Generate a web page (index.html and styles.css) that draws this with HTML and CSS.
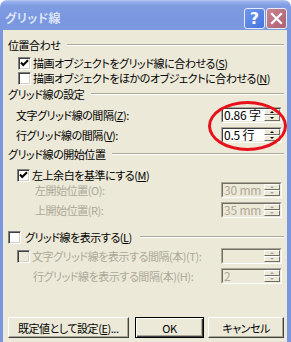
FILE: index.html
```html
<!DOCTYPE html>
<html lang="ja">
<head>
<meta charset="utf-8">
<link rel="stylesheet" href="styles.css">
</head>
<body>
<div class="window">
  <div class="titlebar">
    <span class="title">グリッド線</span>
    <div class="tbtns">
      <span class="tbtn help">?</span>
      <span class="tbtn close"><svg width="13" height="13" viewBox="0 0 13 13"><path d="M2 2L11 11M11 2L2 11" stroke="#fff" stroke-width="2.2" stroke-linecap="square"/></svg></span>
    </div>
  </div>
  <div class="frame">
    <div class="row r1 group"><span>位置合わせ</span><span class="sep"></span></div>
    <div class="row r2 ind10"><span class="cb checked"><svg width="11" height="11" viewBox="0 0 11 11"><path d="M2 4.5L4.2 7L9 2.2" stroke="#000" stroke-width="2" fill="none"/></svg></span><span>描画オブジェクトをグリッド線に合わせる(<u>S</u>)</span></div>
    <div class="row r3 ind10"><span class="cb"></span><span>描画オブジェクトをほかのオブジェクトに合わせる(<u>N</u>)</span></div>
    <div class="row r4 group"><span>グリッド線の設定</span><span class="sep"></span></div>
    <div class="row r5 ind8"><span>文字グリッド線の間隔(<u>Z</u>):</span>
      <div class="spin"><div class="spin-in"><span class="val">0.86 字</span><span class="arrows"><span class="ab"><i class="up"></i></span><span class="ab"><i class="down"></i></span></span></div></div>
    </div>
    <div class="row r6 ind8"><span>行グリッド線の間隔(<u>V</u>):</span>
      <div class="spin"><div class="spin-in"><span class="val">0.5 行</span><span class="arrows"><span class="ab"><i class="up"></i></span><span class="ab"><i class="down"></i></span></span></div></div>
    </div>
    <div class="row r7 group"><span>グリッド線の開始位置</span><span class="sep"></span></div>
    <div class="row r8 ind9"><span class="cb checked"><svg width="11" height="11" viewBox="0 0 11 11"><path d="M2 4.5L4.2 7L9 2.2" stroke="#000" stroke-width="2" fill="none"/></svg></span><span>左上余白を基準にする(<u>M</u>)</span></div>
    <div class="row r9 ind27 dis"><span>左開始位置(O):</span>
      <div class="spin off"><div class="spin-in"><span class="val">30 mm</span><span class="arrows"><span class="ab"><i class="up"></i></span><span class="ab"><i class="down"></i></span></span></div></div>
    </div>
    <div class="row r10 ind27 dis"><span>上開始位置(R):</span>
      <div class="spin off"><div class="spin-in"><span class="val">35 mm</span><span class="arrows"><span class="ab"><i class="up"></i></span><span class="ab"><i class="down"></i></span></span></div></div>
    </div>
    <div class="row r11"><span class="cb"></span><span class="cbt">グリッド線を表示する(<u>L</u>)</span><span class="sep"></span></div>
    <div class="row r12 ind9 dis"><span class="cb off"></span><span>文字グリッド線を表示する間隔(本)(T):</span>
      <div class="spin off"><div class="spin-in"><span class="val"></span><span class="arrows"><span class="ab"><i class="up"></i></span><span class="ab"><i class="down"></i></span></span></div></div>
    </div>
    <div class="row r13 ind25 dis"><span>行グリッド線を表示する間隔(本)(H):</span>
      <div class="spin off"><div class="spin-in"><span class="val">2</span><span class="arrows"><span class="ab"><i class="up"></i></span><span class="ab"><i class="down"></i></span></span></div></div>
    </div>
    <div class="buttons">
      <span class="btn b1">既定値として設定(<u>E</u>)...</span>
      <span class="btn b2 def">OK</span>
      <span class="btn b3">キャンセル</span>
    </div>
  </div>
  <div class="oval"></div>
</div>
</body>
</html>
```
FILE: styles.css
```css
* { box-sizing: border-box; }
html, body { margin: 0; padding: 0; background: #fff; }
body {
  font-family: "Noto Sans CJK JP", "Noto Sans", sans-serif;
  font-size: 11px;
  letter-spacing: -0.45px;
  color: #000;
  font-feature-settings: "palt";
}
u { text-decoration: underline; text-underline-offset: 1px; }

.window {
  position: relative;
  width: 291px;
  height: 342px;
  display: flex;
  flex-direction: column;
  overflow: hidden;
}

.titlebar {
  height: 30px;
  flex: none;
  display: flex;
  align-items: flex-start;
  padding: 8px 4px 0 5px;
  border-radius: 7px 7px 0 0;
  background: linear-gradient(#b4c8f2 0, #95adea 2px, #7f9be2 6px, #7a96df 20px, #7d99e0 30px);
}
.title {
  flex: 1;
  line-height: 20px;
  font-size: 12px;
  font-weight: bold;
  color: #dbe5f8;
  letter-spacing: 0.3px;
}
.tbtns { display: flex; gap: 1px; }
.tbtn {
  width: 21px;
  height: 21px;
  border: 1px solid #e6ecfa;
  border-radius: 3px;
  display: flex;
  align-items: center;
  justify-content: center;
  color: #fff;
  letter-spacing: 0;
}
.help {
  background: linear-gradient(135deg, #6f98ee, #4573dc);
  font: bold 16px "DejaVu Sans", sans-serif;
}
.close { background: linear-gradient(135deg, #c98593, #ad5f70); }

.frame {
  flex: 1;
  display: flex;
  flex-direction: column;
  background: #ece9d8;
  border-left: 3px solid #7a96df;
  border-right: 4px solid #7a96df;
  padding: 0 3px 0 5px;
}

.row {
  display: flex;
  align-items: center;
  height: 14px;
  line-height: 14px;
  white-space: nowrap;
  flex: none;
}
.r1 { margin-top: 8px; }
.r2 { margin-top: 4px; }
.r3 { margin-top: 1px; }
.r4 { margin-top: 2px; }
.r5 { margin-top: 6px; height: 16px; }
.r6 { margin-top: 4px; height: 16px; }
.r7 { margin-top: 4px; }
.r8 { margin-top: 7px; }
.r9 { margin-top: 0; height: 16px; }
.r10 { margin-top: 4px; height: 16px; }
.r11 { margin-top: 12px; }
.r12 { margin-top: 4px; height: 16px; }
.r13 { margin-top: 4px; height: 16px; }

.ind8 { padding-left: 8px; }
.ind9 { padding-left: 9px; }
.ind10 { padding-left: 10px; }
.ind25 { padding-left: 25px; }
.ind27 { padding-left: 27px; }
.dis { color: #aca899; }

.group { gap: 7px; }
.sep {
  flex: 1;
  height: 2px;
  border-top: 1px solid #aca899;
  border-bottom: 1px solid #fff;
}
.r11 .cbt { margin-left: 4px; }
.r11 .sep { margin-left: 8px; }

.cb {
  width: 13px;
  height: 13px;
  flex: none;
  margin-right: 2px;
  background: #fff;
  border: 1px solid;
  border-color: #7f7f7f #fff #fff #7f7f7f;
  box-shadow: inset 1px 1px 0 #404040, inset -1px -1px 0 #d4d0c8;
  display: flex;
  align-items: center;
  justify-content: center;
}
.r11 .cb { margin-right: 0; }
.cb.off { background: #ece9d8; }

.spin {
  margin-left: auto;
  margin-right: 2px;
  width: 61px;
  height: 16px;
  flex: none;
  border: 1px solid;
  border-color: #aca899 #fff #fff #aca899;
}
.spin-in {
  height: 100%;
  display: flex;
  background: #fff;
  border: 1px solid;
  border-color: #404040 #ece9d8 #ece9d8 #404040;
}
.spin.off .spin-in { background: #ece9d8; border-color: #716f64 #ece9d8 #ece9d8 #716f64; }
.val {
  flex: 1;
  padding-left: 1px;
  line-height: 12px;
  font-size: 12px;
  letter-spacing: -0.2px;
  color: #000;
}
.spin.off .val { color: #aca899; }
.arrows {
  width: 16px;
  display: flex;
  flex-direction: column;
}
.ab {
  flex: 1;
  background: #ece9d8;
  border: 1px solid;
  border-color: #fff #716f64 #716f64 #fff;
  display: flex;
  align-items: center;
  justify-content: center;
}
.ab i {
  width: 0;
  height: 0;
  border-left: 2px solid transparent;
  border-right: 2px solid transparent;
}
.ab .up { border-bottom: 2px solid #000; }
.ab .down { border-top: 2px solid #000; }
.spin.off .ab .up { border-bottom-color: #aca899; }
.spin.off .ab .down { border-top-color: #aca899; }

.buttons {
  margin-top: 33px;
  display: flex;
  flex: none;
}
.btn {
  height: 21px;
  display: flex;
  align-items: center;
  justify-content: center;
  background: #ece9d8;
  border: 1px solid;
  border-color: #fff #404040 #404040 #fff;
  box-shadow: inset -1px -1px 0 #aca899;
  white-space: nowrap;
}
.b1 { width: 121px; }
.b2 { width: 70px; margin-left: 6px; }
.b3 { width: 76px; margin-left: 4px; }
.btn.def {
  border: 1px solid #000;
  box-shadow: inset 1px 1px 0 #fff, inset -1px -1px 0 #404040, inset -2px -2px 0 #aca899;
}

.oval {
  position: absolute;
  left: 208px;
  top: 101px;
  width: 79px;
  height: 50px;
  border: 3px solid #e8101a;
  border-radius: 50%;
}
```
